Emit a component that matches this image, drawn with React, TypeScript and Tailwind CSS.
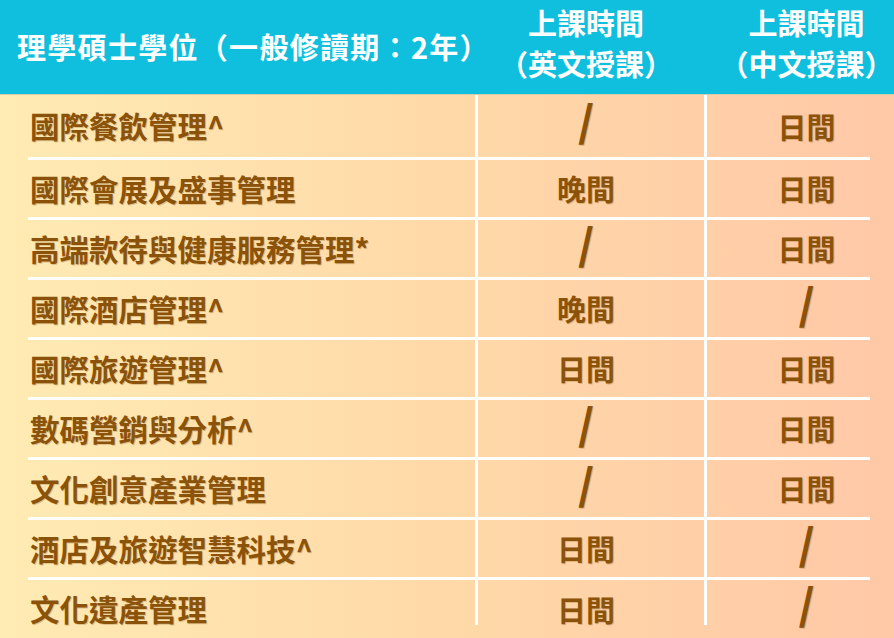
import React from "react";

const rows: [string, string, string][] = [
  ["國際餐飲管理^", "/", "日間"],
  ["國際會展及盛事管理", "晚間", "日間"],
  ["高端款待與健康服務管理*", "/", "日間"],
  ["國際酒店管理^", "晚間", "/"],
  ["國際旅遊管理^", "日間", "日間"],
  ["數碼營銷與分析^", "/", "日間"],
  ["文化創意產業管理", "/", "日間"],
  ["酒店及旅遊智慧科技^", "日間", "/"],
  ["文化遺產管理", "日間", "/"],
];

const font = "font-['Noto_Sans_CJK_TC','Noto_Sans',sans-serif]";

function Cell({ v, extra }: { v: string; extra: string }) {
  if (v === "/") {
    return (
      <div className={`flex items-center justify-center ${extra}`}>
        <span className="text-[42px] font-black leading-none text-[#8B5209] [text-shadow:1px_1px_0_rgba(150,100,40,0.3)] mb-[14px]">/</span>
      </div>
    );
  }
  return (
    <div className={`flex items-center justify-center ${extra}`}>
      <span className="text-[29px] font-bold text-[#8B5209] leading-none [text-shadow:1px_1px_0_rgba(150,100,40,0.3)]">{v}</span>
    </div>
  );
}

export default function App() {
  return (
    <div className={`w-[894px] h-[638px] overflow-hidden bg-gradient-to-r from-[#FFEBB3] via-[#FFD9A8] to-[#FFC8A7] ${font}`}>
      <div className="h-[94px] bg-[#10BFDD] flex text-white font-bold">
        <div className="w-[475px] shrink-0 flex items-center pl-[17px] pb-[2px]">
          <span className="text-[29px] leading-none tracking-[1.3px] whitespace-nowrap">理學碩士學位（一般修讀期：2年）</span>
        </div>
        <div className="w-[3px] shrink-0" />
        <div className="w-[226px] shrink-0 flex flex-col items-center justify-center pr-[10px] text-[29px] leading-[41px] pb-[8px]">
          <span>上課時間</span>
          <span>（英文授課）</span>
        </div>
        <div className="w-[3px] shrink-0" />
        <div className="flex-1 flex flex-col items-center justify-center pl-[12px] text-[29px] leading-[41px] pb-[8px]">
          <span>上課時間</span>
          <span>（中文授課）</span>
        </div>
      </div>
      <div className="h-px bg-[#D4CBA8]" />
      {rows.map((r, i) => {
        const last = i === rows.length - 1;
        return (
          <div key={i}>
            <div className={`flex ${i === 0 ? "h-[62px]" : last ? "h-[58px]" : "h-[57px]"}`}>
              <div className="w-[28px] shrink-0" />
              <div className="w-[447px] shrink-0 flex items-center pl-[2px]">
                <span className="text-[29.5px] font-bold text-[#8B5209] leading-none [text-shadow:1px_1px_0_rgba(150,100,40,0.3)]">{r[0]}</span>
              </div>
              <div className={`w-[3px] shrink-0 bg-white ${last ? "h-[45px]" : ""}`} />
              <Cell v={r[1]} extra="w-[226px] shrink-0 pr-[10px]" />
              <div className={`w-[3px] shrink-0 bg-white ${last ? "h-[45px]" : ""}`} />
              <Cell v={r[2]} extra="flex-1 pl-[12px]" />
            </div>
            {!last && (
              <div className="flex h-[3px]">
                <div className="w-[28px] shrink-0" />
                <div className="w-[842px] bg-white" />
              </div>
            )}
          </div>
        );
      })}
    </div>
  );
}
